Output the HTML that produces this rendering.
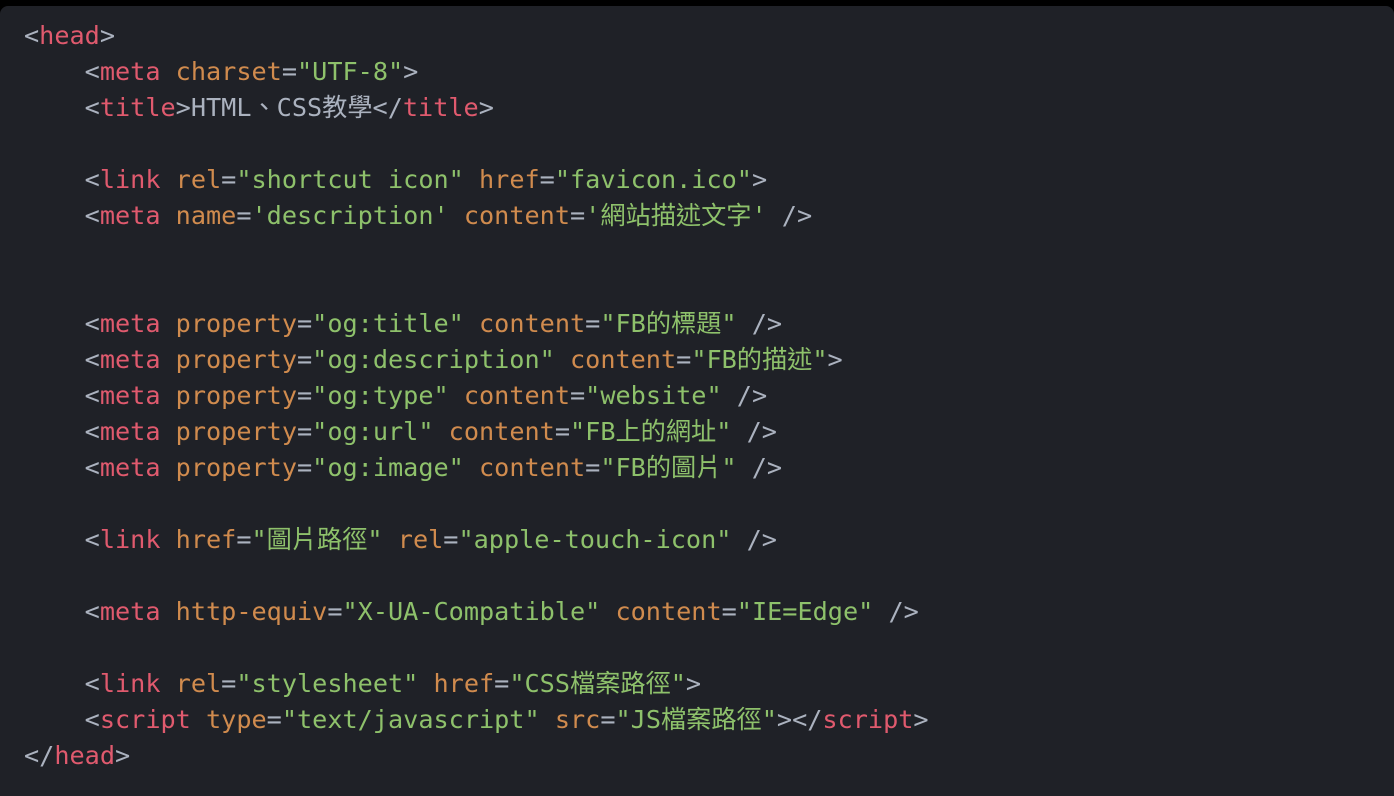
<!DOCTYPE html>
<html><head><meta charset="UTF-8"><style>
html,body{margin:0;padding:0;background:#000;width:1394px;height:782px;overflow:hidden}
.p{position:absolute;top:6px;left:0;width:1394px;height:790px;background:#1f2127;border-radius:8px 8px 0 0}
pre{margin:0;position:absolute;top:18px;left:24px;font-family:"DejaVu Sans Mono","Noto Sans CJK TC",monospace;font-size:25.2px;line-height:36px;color:#abb2bf}
.t{color:#e05a6e}.a{color:#d08b4e}.s{color:#8ec16b}
</style></head><body><div class="p"></div><pre>&lt;<span class="t">head</span>&gt;
    &lt;<span class="t">meta</span> <span class="a">charset</span>=<span class="s">"UTF-8"</span>&gt;
    &lt;<span class="t">title</span>&gt;HTML、CSS教學&lt;/<span class="t">title</span>&gt;

    &lt;<span class="t">link</span> <span class="a">rel</span>=<span class="s">"shortcut icon"</span> <span class="a">href</span>=<span class="s">"favicon.ico"</span>&gt;
    &lt;<span class="t">meta</span> <span class="a">name</span>=<span class="s">'description'</span> <span class="a">content</span>=<span class="s">'網站描述文字'</span> /&gt;


    &lt;<span class="t">meta</span> <span class="a">property</span>=<span class="s">"og:title"</span> <span class="a">content</span>=<span class="s">"FB的標題"</span> /&gt;
    &lt;<span class="t">meta</span> <span class="a">property</span>=<span class="s">"og:description"</span> <span class="a">content</span>=<span class="s">"FB的描述"</span>&gt;
    &lt;<span class="t">meta</span> <span class="a">property</span>=<span class="s">"og:type"</span> <span class="a">content</span>=<span class="s">"website"</span> /&gt;
    &lt;<span class="t">meta</span> <span class="a">property</span>=<span class="s">"og:url"</span> <span class="a">content</span>=<span class="s">"FB上的網址"</span> /&gt;
    &lt;<span class="t">meta</span> <span class="a">property</span>=<span class="s">"og:image"</span> <span class="a">content</span>=<span class="s">"FB的圖片"</span> /&gt;

    &lt;<span class="t">link</span> <span class="a">href</span>=<span class="s">"圖片路徑"</span> <span class="a">rel</span>=<span class="s">"apple-touch-icon"</span> /&gt;

    &lt;<span class="t">meta</span> <span class="a">http-equiv</span>=<span class="s">"X-UA-Compatible"</span> <span class="a">content</span>=<span class="s">"IE=Edge"</span> /&gt;

    &lt;<span class="t">link</span> <span class="a">rel</span>=<span class="s">"stylesheet"</span> <span class="a">href</span>=<span class="s">"CSS檔案路徑"</span>&gt;
    &lt;<span class="t">script</span> <span class="a">type</span>=<span class="s">"text/javascript"</span> <span class="a">src</span>=<span class="s">"JS檔案路徑"</span>&gt;&lt;/<span class="t">script</span>&gt;
&lt;/<span class="t">head</span>&gt;</pre></body></html>
